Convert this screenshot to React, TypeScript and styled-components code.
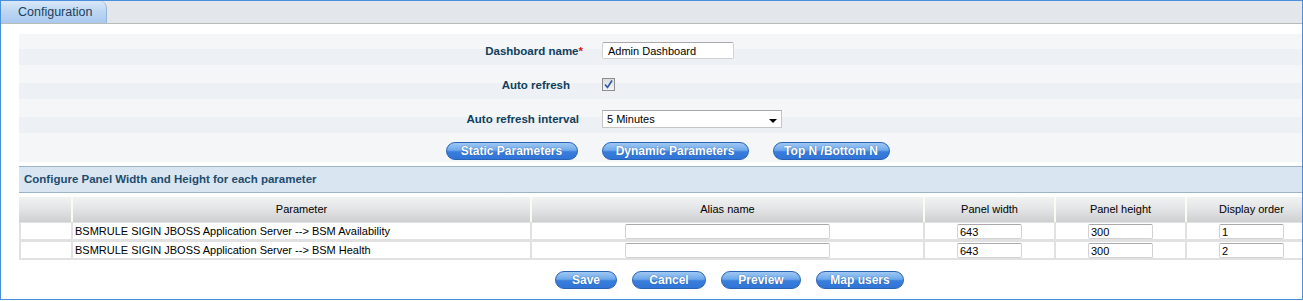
import React from "react";
import styled, { createGlobalStyle } from "styled-components";

const GlobalStyle = createGlobalStyle`
  body {
    margin: 0;
    background: #fff;
    font-family: "Liberation Sans", Arial, sans-serif;
  }
`;

const Frame = styled.div`
  width: 1303px;
  height: 300px;
  box-sizing: border-box;
  border: 1px solid #4b8edc;
  overflow: hidden;
  background: #fff;
`;

const TabStrip = styled.div`
  height: 22px;
  background: #e3e7eb;
  border-bottom: 1px solid #b7bcb6;
  display: flex;
`;

const Tab = styled.div`
  width: 88px;
  height: 22px;
  padding-left: 17px;
  line-height: 22px;
  font-size: 12.5px;
  color: #1c3f5f;
  border-top-right-radius: 7px;
  border-right: 1px solid #93b3d8;
  background: linear-gradient(to bottom, #d9e8f8 0%, #bcd6f2 50%, #a9c9ee 100%);
`;

const Content = styled.div`
  width: 1297px;
  padding: 10px 0 0 18px;
`;

const FormRow = styled.div<{ $h: number; $pt: number }>`
  height: ${(p) => p.$h}px;
  display: flex;
  align-items: center;
  padding-top: ${(p) => p.$pt}px;
  box-sizing: border-box;
  background: linear-gradient(
    to bottom,
    #f5f6f8 calc(100% - 16px),
    #edf1f5 calc(100% - 16px)
  );
`;

const Label = styled.div<{ $pad: number }>`
  width: 564px;
  box-sizing: border-box;
  padding-right: ${(p) => p.$pad}px;
  text-align: right;
  font-weight: bold;
  font-size: 11.5px;
  color: #113f5c;
  margin-right: 19px;
`;

const Req = styled.span`
  color: #d8141c;
`;

const TextField = styled.input<{ $w: number }>`
  width: ${(p) => p.$w}px;
  height: 17px;
  box-sizing: border-box;
  padding: 0 5px;
  border: 1px solid #d2d2d2;
  border-top-color: #a9a9ad;
  border-radius: 2px;
  background: #fff;
  font-family: "Liberation Sans", Arial, sans-serif;
  font-size: 11px;
  color: #000;
  outline: none;
`;

const CheckBox = styled.span`
  width: 13px;
  height: 13px;
  box-sizing: border-box;
  border: 1px solid #8d8d8d;
  background: linear-gradient(to bottom, #d9dce2, #f3f4f6);
  display: flex;
  align-items: center;
  justify-content: center;
`;

const Select = styled.div`
  width: 180px;
  height: 18px;
  box-sizing: border-box;
  border: 1px solid #c6c6c6;
  border-top-color: #a8a8ac;
  background: #fff;
  font-size: 11px;
  line-height: 16px;
  padding-left: 4px;
  position: relative;

  &::after {
    content: "";
    position: absolute;
    right: 4px;
    top: 8px;
    border-left: 4px solid transparent;
    border-right: 4px solid transparent;
    border-top: 4px solid #000;
  }
`;

const ButtonRow = styled.div<{ $pt: number }>`
  display: flex;
  justify-content: center;
  gap: 24px;
  padding-top: ${(p) => p.$pt}px;
`;

const ActionRow = styled(ButtonRow)`
  height: 29px;
  box-sizing: border-box;
  background: #f4f6f8;
  margin-bottom: 4px;
`;

const FooterRow = styled(ButtonRow)`
  justify-content: flex-start;
  padding-left: 536px;
  gap: 15px;
`;

const PillButton = styled.button<{ $w: number }>`
  width: ${(p) => p.$w}px;
  height: 18px;
  padding: 0;
  border: 1px solid #2a62b4;
  border-radius: 9px;
  background: linear-gradient(
    to bottom,
    #9fc8f3 0%,
    #6ea8eb 45%,
    #3a7edc 55%,
    #2f74d6 100%
  );
  color: #fff;
  font-family: "Liberation Sans", Arial, sans-serif;
  font-weight: bold;
  font-size: 12px;
  line-height: 16px;
  text-shadow: 0 0 1px #1b4f99;
`;

const SectionHeader = styled.div`
  height: 25px;
  border-top: 1px solid #9db3cb;
  border-bottom: 1px solid #9db3cb;
  background: #dae5f2;
  padding-left: 5px;
  line-height: 25px;
  font-weight: bold;
  font-size: 11.5px;
  color: #1d4c6c;
`;

const COLS = "457px 391px 129px 129px 129px";

const HeadRow = styled.div`
  margin-top: 4px;
  display: grid;
  grid-template-columns: 52px ${COLS};
  column-gap: 2px;
  background: #fbfbf3;
`;

const HeadCell = styled.div`
  height: 25px;
  line-height: 25px;
  text-align: center;
  font-size: 11px;
  color: #000;
  background: linear-gradient(to bottom, #f1f2f2 0%, #e4e5e6 45%, #cdcfd1 100%);
`;

const Body = styled.div`
  display: grid;
  grid-template-columns: 50px ${COLS};
  column-gap: 2px;
  row-gap: 3px;
  padding: 1px 0 2px 2px;
  background: #e1e1e1;
`;

const Cell = styled.div<{ $center?: boolean }>`
  height: 16px;
  background: #fff;
  display: flex;
  align-items: flex-start;
  justify-content: ${(p) => (p.$center ? "center" : "flex-start")};
  padding-left: ${(p) => (p.$center ? 0 : 2)}px;
  font-size: 11px;
  line-height: 16px;
  color: #000;
`;

const CellField = styled(TextField)`
  height: 15px;
  margin-top: 1px;
  padding: 0 2px;
`;

const params = [
  { name: "BSMRULE SIGIN JBOSS Application Server --> BSM Availability", order: "1" },
  { name: "BSMRULE SIGIN JBOSS Application Server --> BSM Health", order: "2" },
];

const headers = ["", "Parameter", "Alias name", "Panel width", "Panel height", "Display order"];

const App: React.FC = () => {
  return (
    <>
      <GlobalStyle />
      <Frame>
        <TabStrip>
          <Tab>Configuration</Tab>
        </TabStrip>
        <Content>
          <FormRow $h={31} $pt={2}>
            <Label $pad={0}>
              Dashboard name<Req>*</Req>
            </Label>
            <TextField $w={132} defaultValue="Admin Dashboard" readOnly />
          </FormRow>
          <FormRow $h={34} $pt={5}>
            <Label $pad={13}>Auto refresh</Label>
            <CheckBox>
              <svg width="11" height="11" viewBox="0 0 11 11">
                <path d="M2 5.5 L4.5 8.5 L9 1.5" fill="none" stroke="#2f55a4" strokeWidth="1.6" />
              </svg>
            </CheckBox>
          </FormRow>
          <FormRow $h={34} $pt={5}>
            <Label $pad={4}>Auto refresh interval</Label>
            <Select>5 Minutes</Select>
          </FormRow>
          <ActionRow $pt={9}>
            <PillButton $w={132}>Static Parameters</PillButton>
            <PillButton $w={147}>Dynamic Parameters</PillButton>
            <PillButton $w={117}>Top N /Bottom N</PillButton>
          </ActionRow>

          <SectionHeader>Configure Panel Width and Height for each parameter</SectionHeader>

          <HeadRow>
            {headers.map((h, i) => (
              <HeadCell key={i}>{h}</HeadCell>
            ))}
          </HeadRow>
          <Body>
            {params.map((p) => (
              <React.Fragment key={p.order}>
                <Cell />
                <Cell>{p.name}</Cell>
                <Cell $center>
                  <CellField $w={205} readOnly />
                </Cell>
                <Cell $center>
                  <CellField $w={65} defaultValue="643" readOnly />
                </Cell>
                <Cell $center>
                  <CellField $w={65} defaultValue="300" readOnly />
                </Cell>
                <Cell $center>
                  <CellField $w={65} defaultValue={p.order} readOnly />
                </Cell>
              </React.Fragment>
            ))}
          </Body>

          <FooterRow $pt={11}>
            <PillButton $w={62}>Save</PillButton>
            <PillButton $w={74}>Cancel</PillButton>
            <PillButton $w={80}>Preview</PillButton>
            <PillButton $w={88}>Map users</PillButton>
          </FooterRow>
        </Content>
      </Frame>
    </>
  );
};

export default App;
